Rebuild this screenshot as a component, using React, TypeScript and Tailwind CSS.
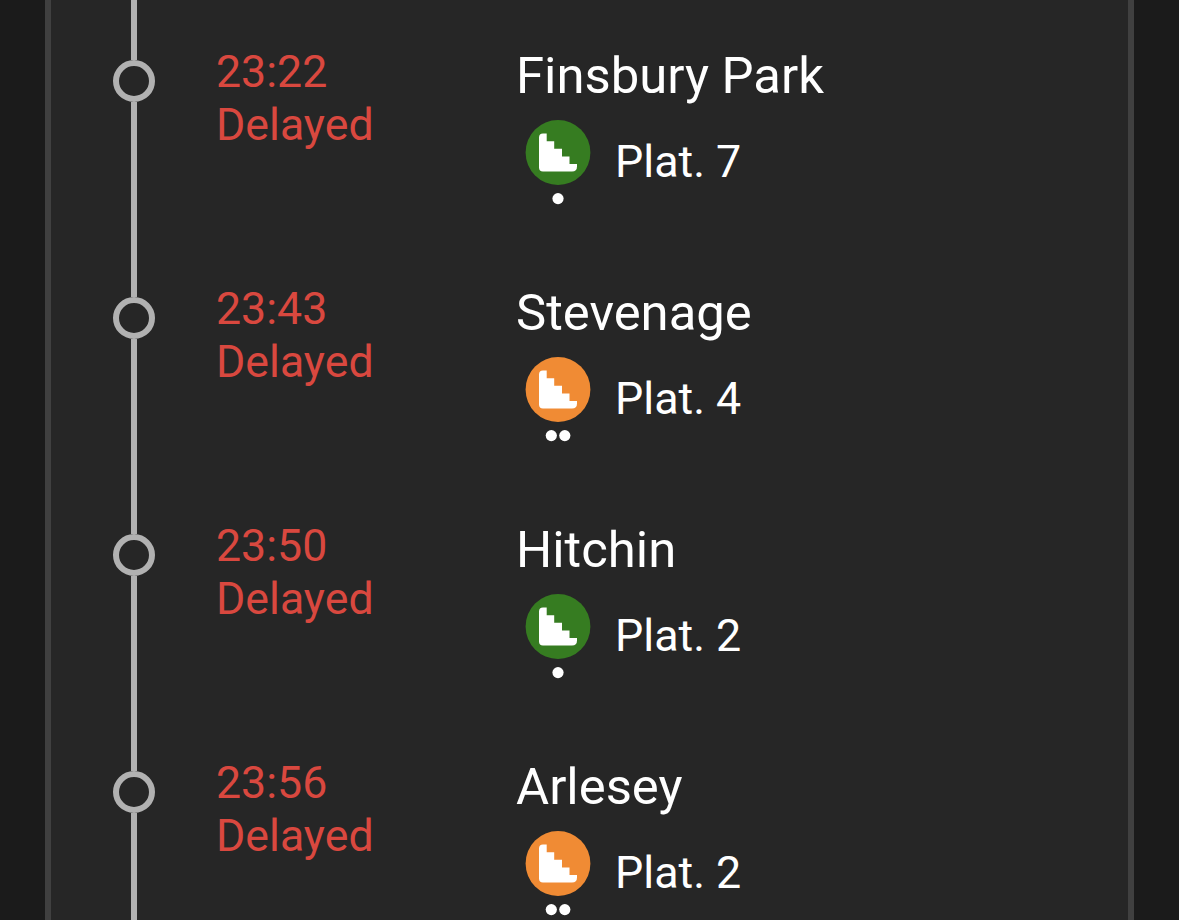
import React from 'react';

type Stop = {
  time: string;
  name: string;
  platform: number;
  level: 1 | 2;
};

const stops: Stop[] = [
  { time: '23:22', name: 'Finsbury Park', platform: 7, level: 1 },
  { time: '23:43', name: 'Stevenage', platform: 4, level: 2 },
  { time: '23:50', name: 'Hitchin', platform: 2, level: 1 },
  { time: '23:56', name: 'Arlesey', platform: 2, level: 2 },
];

// Stairs in a circle, with one or two dots under it for the access level
const AccessIcon: React.FC<{ level: 1 | 2 }> = ({ level }) => (
  <svg className="w-[66px] h-[86px] shrink-0" viewBox="0 0 66 86">
    <circle cx="33" cy="32.5" r="32.4" className={level === 1 ? 'fill-[#367c21]' : 'fill-[#f08b34]'} />
    <path
      fill="white"
      d="M14 17.4Q14 13.4 18 13.4H21.7V21.2H29.2V28.8H37V36.4H44.5V44.1H52V46.4Q52 51.4 47 51.4H18Q14 51.4 14 47.4Z"
    />
    {level === 1 ? (
      <circle cx="33" cy="78.6" r="5.6" fill="white" />
    ) : (
      <>
        <circle cx="26.3" cy="78.6" r="5.6" fill="white" />
        <circle cx="39.8" cy="78.6" r="5.6" fill="white" />
      </>
    )}
  </svg>
);

const StopRow: React.FC<{ stop: Stop }> = ({ stop }) => (
  <li className="flex h-[237px] shrink-0">
    <div className="flex flex-col items-center w-[42px] ml-[62px]">
      <div className="w-[6px] h-[60px] bg-[#b1b1b1]" />
      <div className="w-[42px] h-[42px] rounded-full border-[6px] border-[#b1b1b1]" />
      <div className="w-[6px] flex-1 bg-[#b1b1b1]" />
    </div>
    <div className="w-[300px] ml-[61px] pt-[46px] text-[44.7px] leading-[53px] text-[#d9483f]">
      <p>{stop.time}</p>
      <p>Delayed</p>
    </div>
    <div className="pt-[46px] text-white">
      <h2 className="text-[50.8px] leading-[59px]">{stop.name}</h2>
      <div className="flex items-start mt-[15px] pl-[9px]">
        <AccessIcon level={stop.level} />
        <p className="ml-[24px] mt-[15px] text-[44.8px] leading-[53px]">Plat. {stop.platform}</p>
      </div>
    </div>
  </li>
);

const App: React.FC = () => {
  return (
    <div className="h-screen overflow-hidden bg-[#1b1b1b] px-[45px] font-['Roboto',sans-serif]">
      <ul className="h-full flex flex-col bg-[#262626] border-x-[6px] border-[#404040] overflow-hidden">
        {stops.map((stop) => (
          <StopRow key={stop.time} stop={stop} />
        ))}
      </ul>
    </div>
  );
};

export default App;
